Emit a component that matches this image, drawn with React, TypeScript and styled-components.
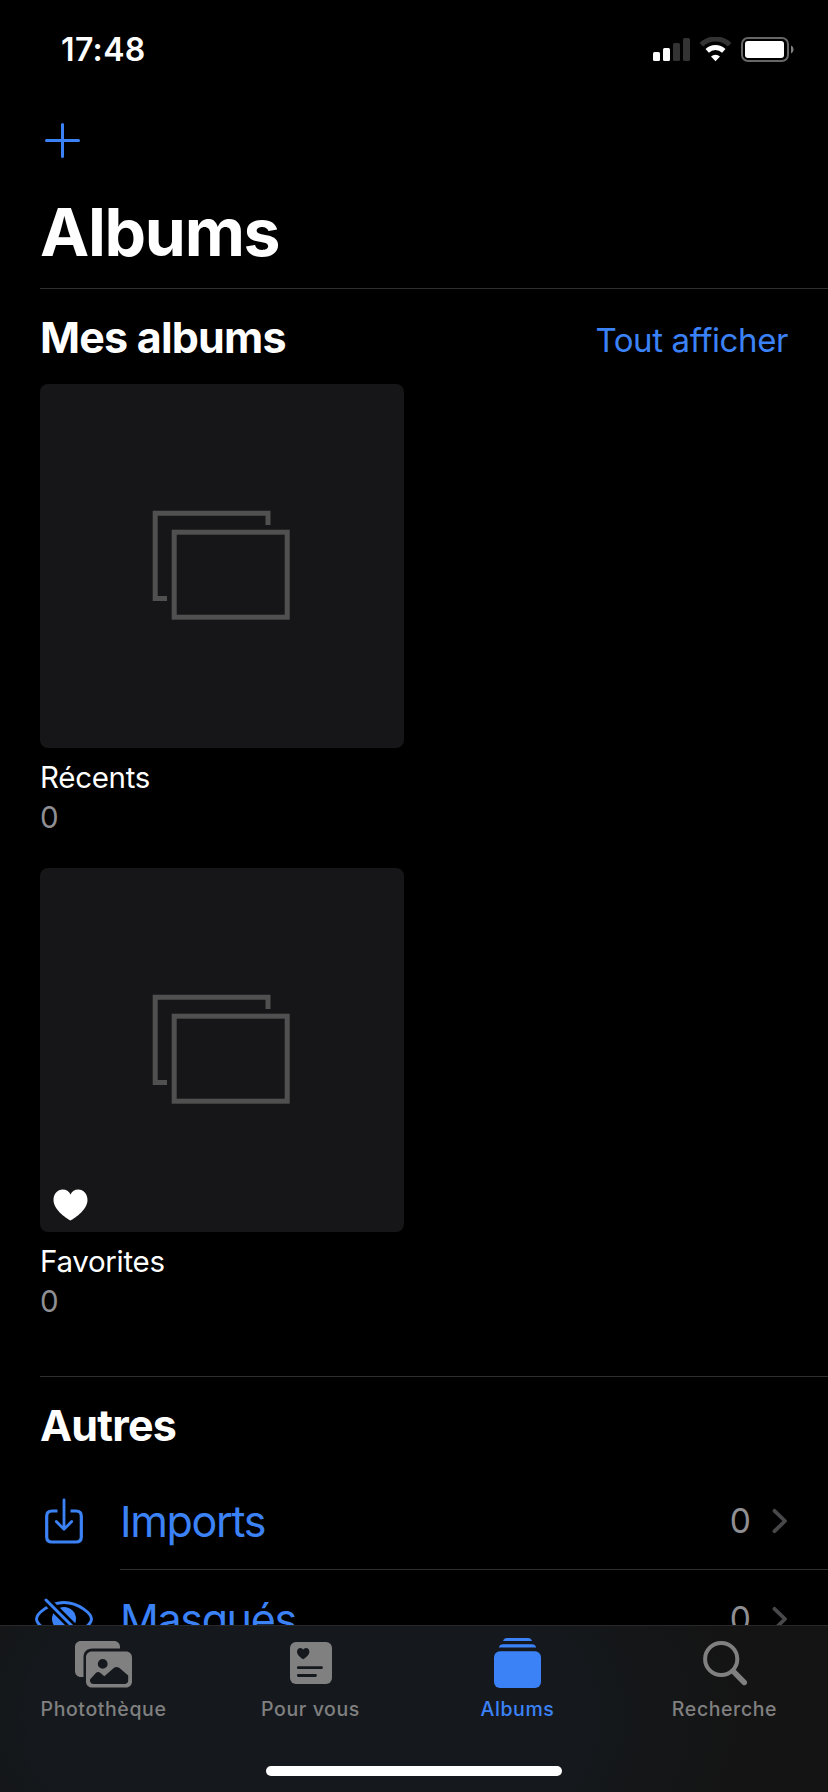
import React from "react";
import styled, { createGlobalStyle } from "styled-components";

const BLUE = "#3c82f7";
const GRAY = "#8e8e93";
const TAB_GRAY = "#808080";
const LINE = "#2f2f31";

const GlobalStyle = createGlobalStyle`
  * { box-sizing: border-box; }
  body { margin: 0; background: #000; }
`;

const Screen = styled.div`
  width: 828px;
  height: 1792px;
  display: flex;
  flex-direction: column;
  overflow: hidden;
  background: #000;
  color: #fff;
  font-family: Inter, "Liberation Sans", sans-serif;
`;

const StatusBar = styled.header`
  flex: none;
  height: 100px;
  display: flex;
  align-items: center;
  justify-content: space-between;
  padding: 0 34px 0 61px;
`;

const Clock = styled.time`
  font-size: 32px;
  font-weight: 600;
  line-height: 40px;
  letter-spacing: 0.35px;
`;

const Indicators = styled.div`
  display: flex;
  align-items: center;
  svg { display: block; }
`;

const Content = styled.main`
  flex: 1;
  min-height: 0;
  overflow: hidden;
`;

const Toolbar = styled.div`
  height: 80px;
  display: flex;
  align-items: center;
  padding: 1px 0 0 44px;
`;

const LargeTitle = styled.h1`
  margin: 0;
  height: 108px;
  padding-left: 40px;
  font-size: 66px;
  font-weight: 700;
  line-height: 104px;
  letter-spacing: -1.3px;
`;

const Section = styled.section<{ $bottom?: number }>`
  margin-left: 40px;
  border-top: 1px solid ${LINE};
  padding-bottom: ${(p) => p.$bottom ?? 0}px;
`;

const SectionHeader = styled.div`
  height: 95px;
  padding: 1px 40px 0 0;
  display: flex;
  align-items: center;
  justify-content: space-between;
`;

const SectionTitle = styled.h2`
  margin: 0;
  font-size: 43px;
  font-weight: 700;
  line-height: 52px;
  letter-spacing: -0.8px;
`;

const SeeAll = styled.a`
  margin-top: 6px;
  color: ${BLUE};
  font-size: 33px;
  line-height: 42px;
  letter-spacing: -0.4px;
`;

const AlbumList = styled.div`
  display: flex;
  flex-direction: column;
  gap: 30px;
`;

const Album = styled.article`
  width: 364px;
  height: 454px;
`;

const Cover = styled.div`
  position: relative;
  height: 364px;
  display: flex;
  align-items: center;
  justify-content: center;
  padding: 0 2px 2px 0;
  border-radius: 8px;
  background: #161618;
`;

const FavoriteBadge = styled.svg`
  position: absolute;
  left: 13px;
  bottom: 11px;
`;

const AlbumName = styled.div`
  padding-top: 9px;
  font-size: 29.5px;
  line-height: 40px;
  letter-spacing: -0.3px;
`;

const AlbumCount = styled.div`
  color: ${GRAY};
  font-size: 29.5px;
  line-height: 40px;
`;

const Row = styled.div`
  height: 98px;
  margin-left: -8px;
  display: flex;
  align-items: stretch;
`;

const RowIcon = styled.div`
  width: 64px;
  margin-right: 24px;
  display: flex;
  align-items: center;
  justify-content: center;
  svg { flex: none; }
`;

const RowBody = styled.div`
  flex: 1;
  display: flex;
  align-items: center;
  padding-right: 40px;
  border-bottom: 1px solid ${LINE};
`;

const RowLabel = styled.span`
  flex: 1;
  color: ${BLUE};
  font-size: 43px;
  line-height: 52px;
  letter-spacing: -1.35px;
`;

const RowCount = styled.span`
  margin-right: 20px;
  color: ${GRAY};
  font-size: 33.5px;
  line-height: 40px;
`;

const TabBar = styled.nav`
  flex: none;
  height: 167px;
  display: flex;
  flex-direction: column;
  align-items: center;
  justify-content: space-between;
  padding-bottom: 16px;
  border-top: 1px solid #29292b;
  background: radial-gradient(ellipse 430px 260px at 310px 90px, #15191e 0%, #15191d 60%, #141414 100%);
`;

const Tabs = styled.div`
  width: 100%;
  display: flex;
`;

const Tab = styled.a<{ $active?: boolean }>`
  flex: 1;
  display: flex;
  flex-direction: column;
  align-items: center;
  color: ${(p) => (p.$active ? BLUE : TAB_GRAY)};
  svg { display: block; }
`;

const TabLabel = styled.span`
  margin-top: 5px;
  font-size: 19.5px;
  font-weight: 500;
  line-height: 28px;
  letter-spacing: 0.6px;
`;

const HomeIndicator = styled.div`
  width: 296px;
  height: 10px;
  border-radius: 5px;
  background: #fff;
`;

const HEART =
  "M17 31C15 30 0 21 0 10.5C0 4.5 4 0 9.3 0C12.8 0 15.4 1.9 17 4.9C18.6 1.9 21.2 0 24.7 0C30 0 34 4.5 34 10.5C34 21 19 30 17 31Z";

const StatusIcons = () => (
  <svg width="142" height="26" viewBox="0 0 142 26" fill="#fff">
    <rect x="1" y="15" width="7" height="9" rx="1.5" />
    <rect x="11" y="11" width="7" height="13" rx="1.5" />
    <rect x="21" y="6" width="7" height="18" rx="1.5" fill="#333" />
    <rect x="31" y="1" width="7" height="23" rx="1.5" fill="#333" />
    <path d="M49.4 7.7A20 20 0 0 1 77.6 7.7" fill="none" stroke="#333" strokeWidth="5" />
    <path d="M55.2 13.8A12.3 12.3 0 0 1 71.8 13.8" fill="none" stroke="#fff" strokeWidth="5" />
    <path d="M59 19.4A6.8 6.8 0 0 1 68 19.4L63.5 24.2Z" />
    <rect x="90" y="1" width="46" height="23" rx="6" fill="none" stroke="#666" strokeWidth="2" />
    <rect x="93" y="4" width="39" height="17" rx="3" />
    <path d="M139 8.5A4.4 4.4 0 0 1 139 16.5Z" fill="#808080" />
  </svg>
);

const PlusIcon = () => (
  <svg width="37" height="37" viewBox="0 0 37 37" stroke={BLUE} strokeWidth="3" strokeLinecap="round">
    <path d="M18.5 2.5V34.5M2.5 18.5H34.5" />
  </svg>
);

const StackIcon = () => (
  <svg width="138" height="110" viewBox="0 0 138 110" fill="none" stroke="#505050" strokeWidth="5">
    <path d="M15 88.5H3.2V3.2H116V15" />
    <rect x="22.2" y="22.2" width="113" height="85" />
  </svg>
);

const ImportIcon = () => (
  <svg width="38" height="48" viewBox="0 0 38 48" fill="none" stroke={BLUE} strokeWidth="3.2" strokeLinecap="round" strokeLinejoin="round">
    <path d="M12.5 14H7C3.7 14 1.7 16 1.7 19V40C1.7 43 3.7 45 7 45H31C34.3 45 36.3 43 36.3 40V19C36.3 16 34.3 14 31 14H25.5" strokeLinecap="butt" />
    <path d="M19 3V32M11.3 24.5L19 32.2L26.7 24.5" strokeWidth="2.8" />
  </svg>
);

const HiddenIcon = () => (
  <svg width="58" height="42" viewBox="0 0 58 42" fill="none" stroke={BLUE} strokeLinecap="round">
    <path d="M29 4.5C44 4.5 56.5 16 56.5 21S44 37.5 29 37.5S1.5 26 1.5 21S14 4.5 29 4.5Z" strokeWidth="3" />
    <circle cx="29" cy="21" r="12" fill={BLUE} stroke="none" />
    <path d="M12.5 3.5L47.5 38.5" stroke="#000" strokeWidth="8.5" strokeLinecap="butt" />
    <path d="M11 2L47 38" strokeWidth="3" />
  </svg>
);

const Chevron = () => (
  <svg width="17" height="28" viewBox="0 0 17 28" fill="none" stroke="#48484a" strokeWidth="3.8" strokeLinecap="round" strokeLinejoin="round">
    <path d="M3.5 3.8L14 14L3.5 24.2" />
  </svg>
);

const LibraryIcon = () => (
  <svg width="58" height="64" viewBox="0 0 58 64" fill="currentColor">
    <path d="M6 15H39C42.5 15 45 17.5 45 21V22.5H17C12 22.5 8.5 26 8.5 31V51H6C2.5 51 0 48.5 0 45V21C0 17.5 2.5 15 6 15Z" />
    <path
      fillRule="evenodd"
      d="M17 25.5H51C54.5 25.5 57 28 57 31.5V55.5C57 59 54.5 61.5 51 61.5H17C13.5 61.5 11 59 11 55.5V31.5C11 28 13.5 25.5 17 25.5ZM27.7 33A4.9 4.9 0 1 0 27.7 42.8A4.9 4.9 0 1 0 27.7 33ZM15 53.5V54.5C15 56.5 16.3 58 18.5 58H49.5C51.7 58 53.2 56.5 53.2 54.5V49.5L44.5 42C42.5 40.5 40.5 40.5 38.8 42L29.3 50.2L25.5 47C23.8 45.7 22.2 45.8 20.6 47.2Z"
    />
  </svg>
);

const ForYouIcon = () => (
  <svg width="44" height="64" viewBox="0 0 44 64">
    <rect x="1" y="16" width="42" height="42" rx="6" fill="currentColor" />
    <g transform="translate(8 22) scale(0.365)">
      <path d={HEART} fill="#15191d" />
    </g>
    <path d="M9.3 41.7H32.5M9.3 49.5H26.5" stroke="#15191d" strokeWidth="2.8" strokeLinecap="round" />
  </svg>
);

const AlbumsIcon = () => (
  <svg width="47" height="64" viewBox="0 0 47 64" fill="currentColor">
    <path d="M9 15C9.7 13 11 12 13 12H34C36 12 37.3 13 38 15Z" />
    <path d="M4.8 21.6C5.2 19.4 6.8 18.2 9 18.2H38C40.2 18.2 41.8 19.4 42.2 21.6Z" />
    <rect x="0" y="25.2" width="47" height="36.8" rx="6" />
  </svg>
);

const SearchIcon = () => (
  <svg width="46" height="64" viewBox="0 0 46 64" fill="none" stroke="currentColor">
    <circle cx="19.2" cy="33" r="16.1" strokeWidth="4" />
    <path d="M31 45L42.3 56.5" strokeWidth="5.4" strokeLinecap="round" />
  </svg>
);

const albums = [
  { name: "Récents", count: 0, favorite: false },
  { name: "Favorites", count: 0, favorite: true },
];

const others = [
  { name: "Imports", count: 0, Icon: ImportIcon },
  { name: "Masqués", count: 0, Icon: HiddenIcon },
];

const tabs = [
  { name: "Photothèque", Icon: LibraryIcon, active: false },
  { name: "Pour vous", Icon: ForYouIcon, active: false },
  { name: "Albums", Icon: AlbumsIcon, active: true },
  { name: "Recherche", Icon: SearchIcon, active: false },
];

export default function App() {
  return (
    <Screen>
      <GlobalStyle />
      <StatusBar>
        <Clock>17:48</Clock>
        <Indicators>
          <StatusIcons />
        </Indicators>
      </StatusBar>
      <Content>
        <Toolbar>
          <PlusIcon />
        </Toolbar>
        <LargeTitle>Albums</LargeTitle>
        <Section $bottom={54}>
          <SectionHeader>
            <SectionTitle>Mes albums</SectionTitle>
            <SeeAll>Tout afficher</SeeAll>
          </SectionHeader>
          <AlbumList>
            {albums.map((a) => (
              <Album key={a.name}>
                <Cover>
                  <StackIcon />
                  {a.favorite && (
                    <FavoriteBadge width="35" height="32" viewBox="-0.5 -0.5 35 32" fill="#fff">
                      <path d={HEART} />
                    </FavoriteBadge>
                  )}
                </Cover>
                <AlbumName>{a.name}</AlbumName>
                <AlbumCount>{a.count}</AlbumCount>
              </Album>
            ))}
          </AlbumList>
        </Section>
        <Section>
          <SectionHeader>
            <SectionTitle>Autres</SectionTitle>
          </SectionHeader>
          {others.map(({ name, count, Icon }) => (
            <Row key={name}>
              <RowIcon>
                <Icon />
              </RowIcon>
              <RowBody>
                <RowLabel>{name}</RowLabel>
                <RowCount>{count}</RowCount>
                <Chevron />
              </RowBody>
            </Row>
          ))}
        </Section>
      </Content>
      <TabBar>
        <Tabs>
          {tabs.map(({ name, Icon, active }) => (
            <Tab key={name} $active={active}>
              <Icon />
              <TabLabel>{name}</TabLabel>
            </Tab>
          ))}
        </Tabs>
        <HomeIndicator />
      </TabBar>
    </Screen>
  );
}
